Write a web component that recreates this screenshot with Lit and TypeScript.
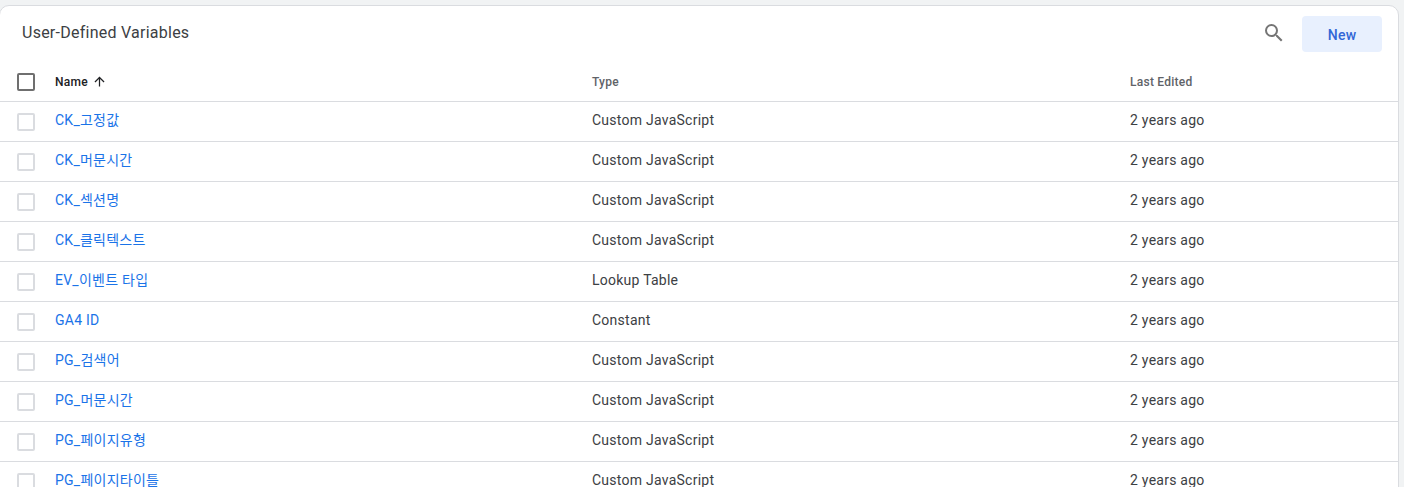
import { LitElement, html, css, svg } from "lit";
import { customElement } from "lit/decorators.js";

const rows: [string, string][] = [
  ["CK_고정값", "Custom JavaScript"],
  ["CK_머문시간", "Custom JavaScript"],
  ["CK_섹션명", "Custom JavaScript"],
  ["CK_클릭텍스트", "Custom JavaScript"],
  ["EV_이벤트 타입", "Lookup Table"],
  ["GA4 ID", "Constant"],
  ["PG_검색어", "Custom JavaScript"],
  ["PG_머문시간", "Custom JavaScript"],
  ["PG_페이지유형", "Custom JavaScript"],
  ["PG_페이지타이틀", "Custom JavaScript"],
];

const searchIcon = svg`<path d="M15.5 14h-.79l-.28-.27A6.47 6.47 0 0 0 16 9.5 6.5 6.5 0 1 0 9.5 16c1.61 0 3.09-.59 4.23-1.57l.27.28v.79l5 4.99L20.49 19l-4.99-5zm-6 0C7.01 14 5 11.99 5 9.5S7.01 5 9.5 5 14 7.01 14 9.5 11.99 14 9.5 14z"/>`;

const arrowUp = svg`<path d="M4 12l1.41 1.41L11 7.83V20h2V7.83l5.58 5.59L20 12l-8-8-8 8z"/>`;

@customElement("app-root")
export class AppRoot extends LitElement {
  static styles = css`
    :host {
      display: block;
      height: 487px;
      overflow: hidden;
      background: #f1f3f4;
      padding-top: 5px;
      box-sizing: border-box;
      font-family: Roboto, "Noto Sans CJK KR", sans-serif;
      letter-spacing: 0.25px;
    }

    .card {
      width: 1400px;
      margin-left: -1px;
      box-sizing: border-box;
      background: #fff;
      border: 1px solid #dadce0;
      border-radius: 10px 10px 0 0;
    }

    .toolbar {
      height: 56px;
      padding: 0 16px 0 22px;
      display: flex;
      align-items: center;
      justify-content: space-between;
    }

    .title {
      font-size: 16px;
      line-height: 20px;
      color: #3c4043;
      padding-bottom: 2px;
    }

    .actions {
      display: flex;
      align-items: center;
      gap: 16px;
    }

    .search {
      width: 24px;
      height: 24px;
      fill: #757575;
      margin-bottom: 2px;
    }

    .new {
      width: 80px;
      height: 36px;
      border: none;
      border-radius: 4px;
      background: #e8f0fe;
      color: #3367d6;
      font: 500 14px Roboto, sans-serif;
      letter-spacing: 0.25px;
      padding: 2px 0 0;
    }

    .row {
      display: grid;
      grid-template-columns: 55px 537px 538px 1fr;
      align-items: center;
      height: 40px;
      box-sizing: border-box;
      border-bottom: 1px solid #dadce0;
      font-size: 14px;
      line-height: 20px;
      color: #3c4043;
    }

    .cell {
      padding-bottom: 3px;
    }

    .head {
      font-size: 12px;
      font-weight: 500;
      color: #5f6368;
    }

    .head .cell {
      padding-bottom: 0;
    }

    .head .name {
      display: flex;
      align-items: center;
      gap: 4px;
      color: #202124;
    }

    .arrow {
      width: 15px;
      height: 15px;
      fill: #202124;
    }

    .check {
      width: 18px;
      height: 18px;
      margin-left: 17px;
      box-sizing: border-box;
      border: 2px solid #dadce0;
      border-radius: 2px;
    }

    .head .check {
      border-color: #6f6f6f;
    }

    .link {
      color: #1a73e8;
    }
  `;

  render() {
    return html`
      <div class="card">
        <div class="toolbar">
          <div class="title">User-Defined Variables</div>
          <div class="actions">
            <svg class="search" viewBox="0 0 24 24">${searchIcon}</svg>
            <button class="new">New</button>
          </div>
        </div>
        <div class="row head">
          <div class="check"></div>
          <div class="cell name">
            Name <svg class="arrow" viewBox="0 0 24 24">${arrowUp}</svg>
          </div>
          <div class="cell">Type</div>
          <div class="cell">Last Edited</div>
        </div>
        ${rows.map(
          ([name, type]) => html`
            <div class="row">
              <div class="check"></div>
              <div class="cell link">${name}</div>
              <div class="cell">${type}</div>
              <div class="cell">2 years ago</div>
            </div>
          `,
        )}
      </div>
    `;
  }
}
